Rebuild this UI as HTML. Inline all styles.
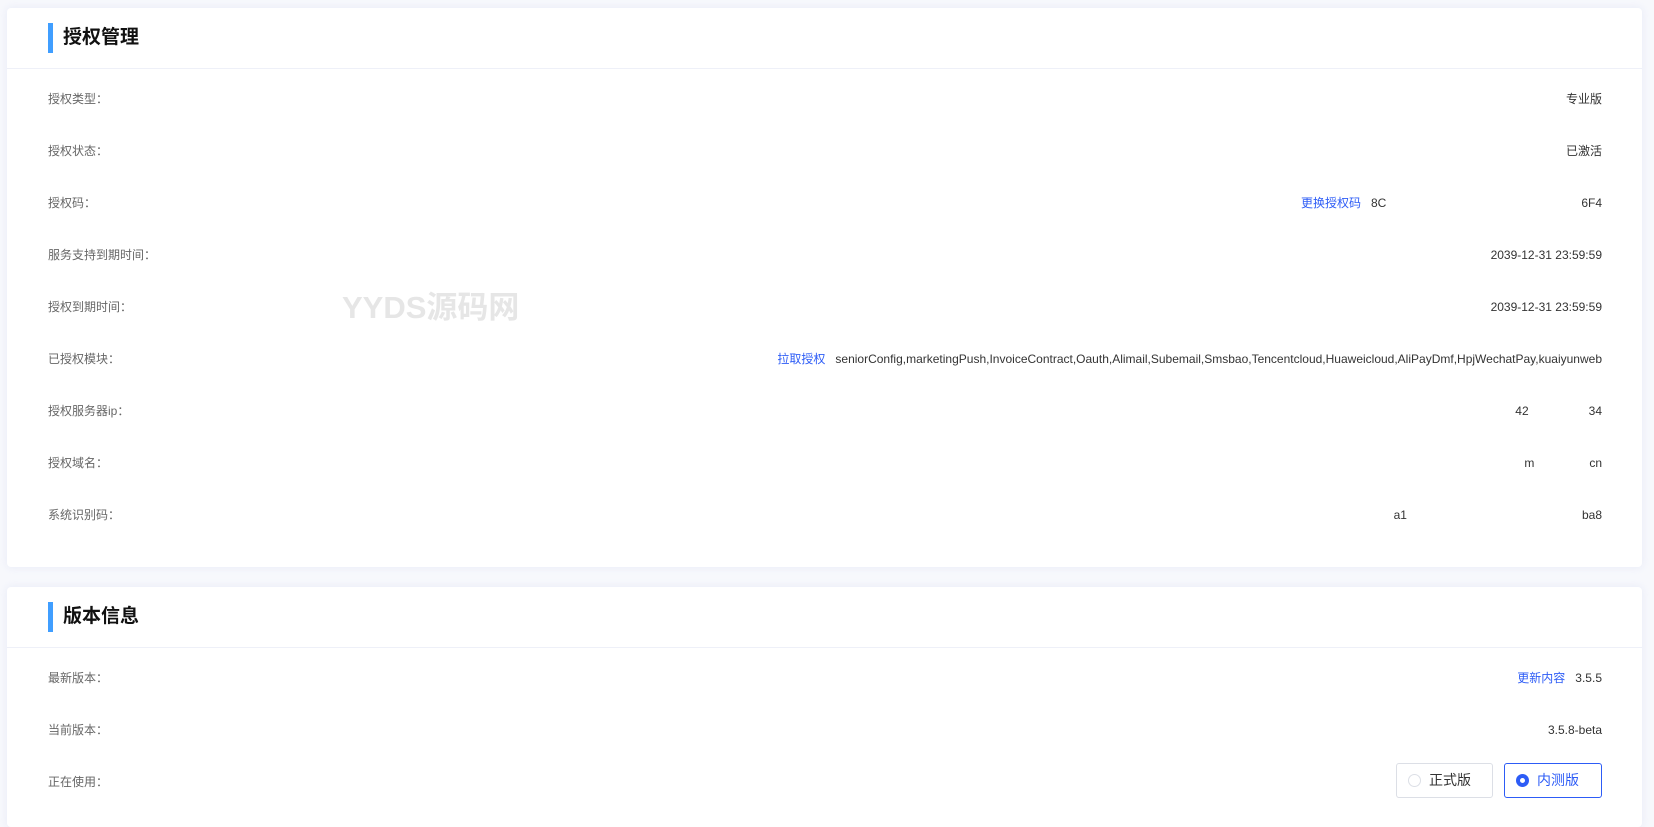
<!DOCTYPE html>
<html><head><meta charset="utf-8"><style>
*{margin:0;padding:0;box-sizing:border-box}
body{width:1654px;height:819px;overflow:hidden;background:#f7f8fc;font-family:"Liberation Sans","Noto Sans CJK SC",sans-serif;position:relative}
.card{position:absolute;left:7px;width:1635px;background:#fff;border-radius:4px;box-shadow:0 0 8px rgba(220,225,245,.6)}
.hd{position:absolute;left:41px;height:30px;border-left:5px solid #409eff;padding-left:10px;font-size:19px;font-weight:bold;line-height:30px;color:#111}
.dv{position:absolute;left:0;right:0;height:1px;background:#eef0f8}
.row{position:absolute;left:41px;right:40px;height:20px;line-height:20px;font-size:12px}
.l{position:absolute;left:0;color:#666}
.v{position:absolute;right:0;color:#333;white-space:nowrap}
.a{color:#2d5cf6;margin-right:10px}
.btn{position:absolute;top:763px;height:35px;border:1px solid #dcdfe6;border-radius:3px;font-size:14px;line-height:33px;color:#333}
.btn i{position:absolute;left:11px;top:10px;width:13px;height:13px;border:1px solid #dcdfe6;border-radius:50%}
.btn span{position:absolute;left:32px}
.wm{position:absolute;left:342px;top:282px;font-size:31px;font-weight:bold;color:#e6e6e6}
</style></head><body>
<div class="card" style="top:8px;height:559px">
<div class="hd" style="top:15px">授权管理</div>
<div class="dv" style="top:60px"></div>
</div>
<div class="card" style="top:587px;height:240px">
<div class="hd" style="top:15px">版本信息</div>
<div class="dv" style="top:60px"></div>
</div>
<div class="wm">YYDS源码网</div>
<div style="position:absolute;left:7px;width:1635px;top:0;height:819px">
<div class="row" style="top:89px"><span class="l">授权类型：</span><span class="v">专业版</span></div>
<div class="row" style="top:141px"><span class="l">授权状态：</span><span class="v">已激活</span></div>
<div class="row" style="top:193px"><span class="l">授权码：</span><span class="v"><span class="a">更换授权码</span>8C<span style="display:inline-block;width:195px"></span>6F4</span></div>
<div class="row" style="top:245px"><span class="l">服务支持到期时间：</span><span class="v">2039-12-31 23:59:59</span></div>
<div class="row" style="top:297px"><span class="l">授权到期时间：</span><span class="v">2039-12-31 23:59:59</span></div>
<div class="row" style="top:349px"><span class="l">已授权模块：</span><span class="v"><span class="a">拉取授权</span>seniorConfig,marketingPush,InvoiceContract,Oauth,Alimail,Subemail,Smsbao,Tencentcloud,Huaweicloud,AliPayDmf,HpjWechatPay,kuaiyunweb</span></div>
<div class="row" style="top:401px"><span class="l">授权服务器ip：</span><span class="v">42<span style="display:inline-block;width:60px"></span>34</span></div>
<div class="row" style="top:453px"><span class="l">授权域名：</span><span class="v">m<span style="display:inline-block;width:55px"></span>cn</span></div>
<div class="row" style="top:505px"><span class="l">系统识别码：</span><span class="v">a1<span style="display:inline-block;width:175px"></span>ba8</span></div>
<div class="row" style="top:668px"><span class="l">最新版本：</span><span class="v"><span class="a">更新内容</span>3.5.5</span></div>
<div class="row" style="top:720px"><span class="l">当前版本：</span><span class="v">3.5.8-beta</span></div>
<div class="row" style="top:772px"><span class="l">正在使用：</span></div>
</div>
<div class="btn" style="left:1396px;width:97px"><i></i><span>正式版</span></div>
<div class="btn" style="left:1504px;width:98px;border-color:#2d5cf6;color:#2d5cf6"><i style="border:4px solid #2d5cf6"></i><span>内测版</span></div>
</body></html>
